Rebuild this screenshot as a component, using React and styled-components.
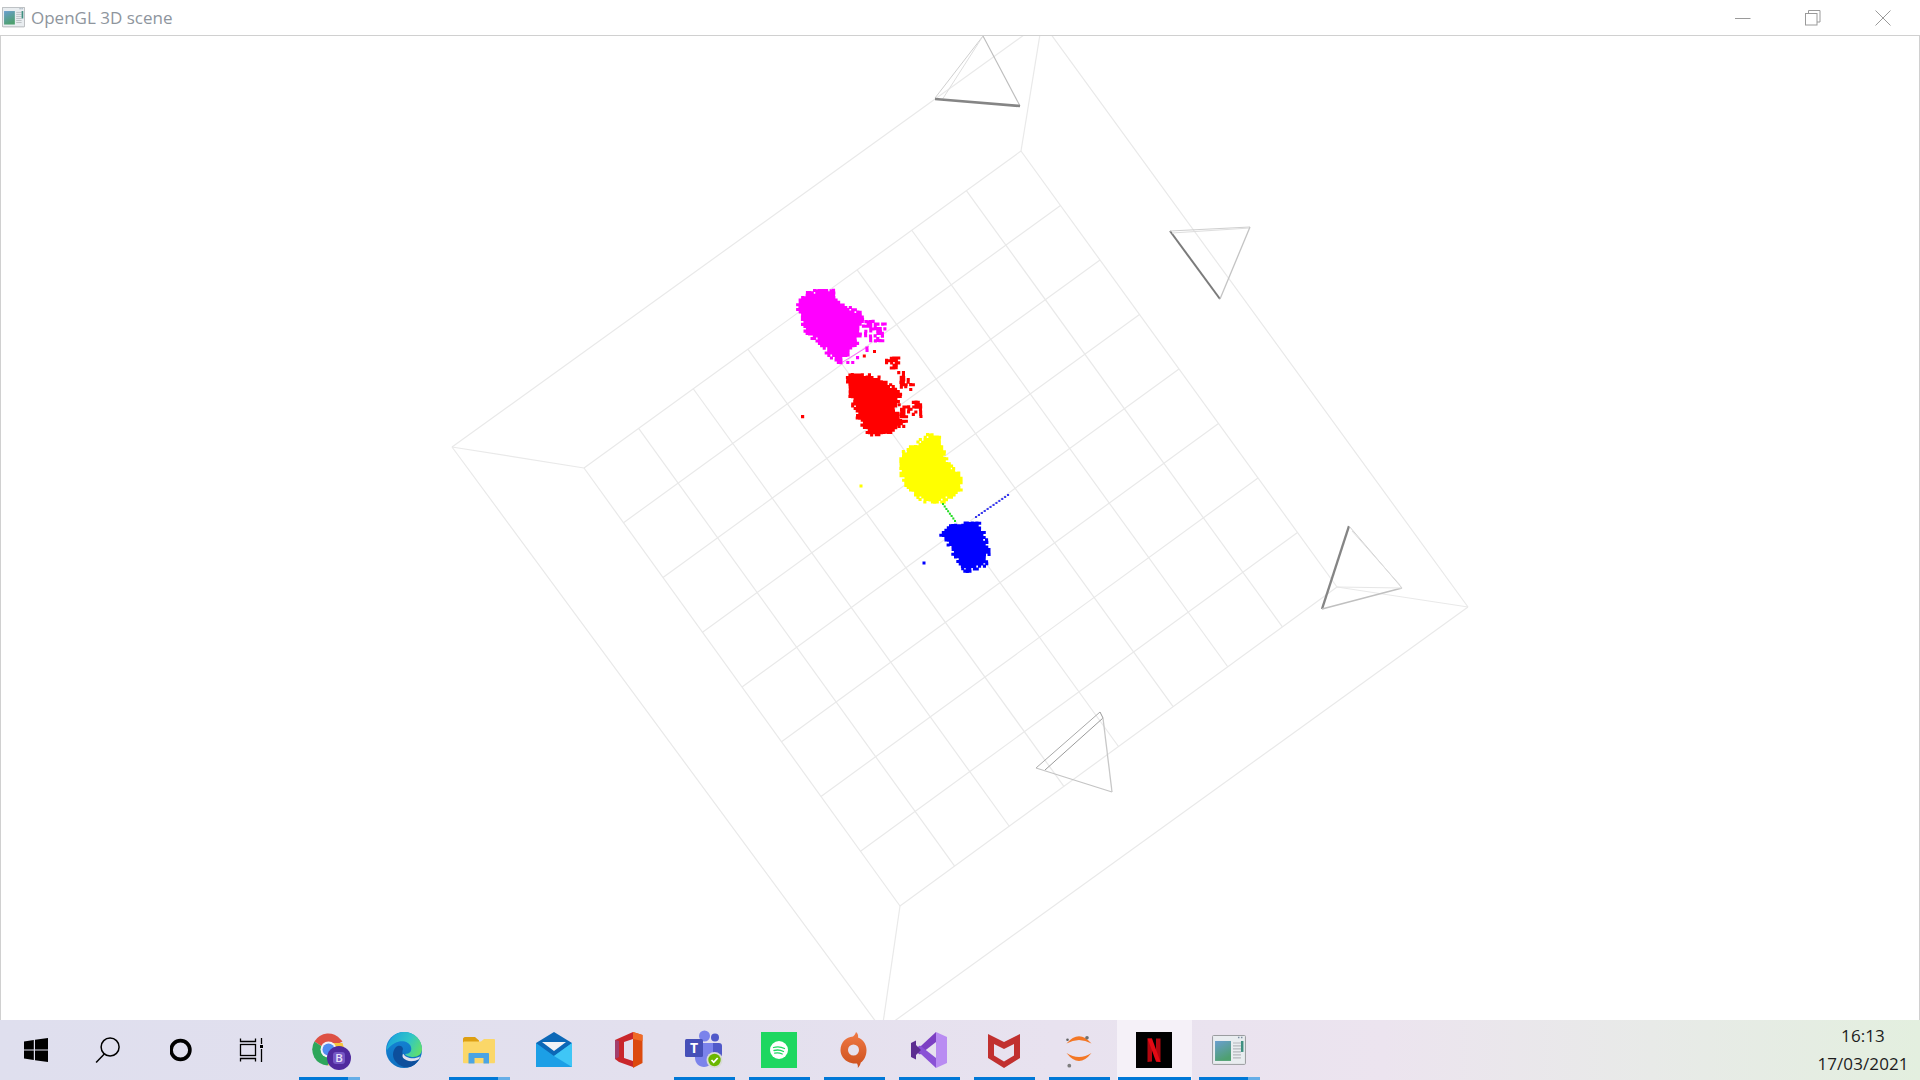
import React from 'react';
import styled, { createGlobalStyle } from 'styled-components';

const GlobalStyle = createGlobalStyle`
  html, body { margin: 0; padding: 0; background: #fff; overflow: hidden; }
  body { font-family: "Open Sans", "Noto Sans", sans-serif; }
`;

const Page = styled.div`
  display: flex;
  flex-direction: column;
  width: 1920px;
  height: 1080px;
`;

const TitleBar = styled.header`
  display: flex;
  align-items: center;
  flex: 0 0 36px;
  box-sizing: border-box;
  padding-left: 2px;
  background: #fff;
  border-bottom: 1px solid #d0d0d0;
`;

const TitleText = styled.span`
  margin-left: 6px;
  font-size: 17px;
  color: #8e959d;
`;

const WindowButtons = styled.div`
  display: flex;
  margin-left: auto;
  margin-right: 2px;
`;

const WindowButton = styled.div`
  display: flex;
  align-items: center;
  justify-content: center;
  width: 70px;
  height: 33px;
`;

const Viewport = styled.main`
  flex: 1;
  min-height: 0;
  overflow: hidden;
  border-left: 1px solid #d0d0d0;
  border-right: 1px solid #d0d0d0;
  svg { display: block; width: 100%; height: 100%; }
`;

const Taskbar = styled.footer`
  display: flex;
  flex: 0 0 60px;
  background: linear-gradient(90deg, #dfdfee 0%, #e3e0ee 35%, #e8e2ef 55%, #ece4ef 72%, #e8eae8 86%, #e3efdf 100%);
`;

const ShellButton = styled.div`
  display: flex;
  align-items: center;
  justify-content: center;
  width: 73px;
`;

const Tile = styled.div`
  position: relative;
  display: flex;
  align-items: center;
  justify-content: center;
  box-sizing: border-box;
  width: 75px;
  padding-right: 1px;
  background: ${p => (p.$active ? '#f5f1f8' : 'transparent')};
  svg { overflow: visible; }
  ${p => p.$running && `
    &::after {
      content: "";
      position: absolute;
      bottom: 0;
      left: ${p.$active ? '1px' : '7px'};
      right: ${p.$active ? '1px' : '7px'};
      height: 3px;
      background: ${p.$stacked
        ? 'linear-gradient(90deg, #0078d7 0 80%, #66aee7 80% 100%)'
        : '#0078d7'};
    }
  `}
`;

const Clock = styled.div`
  display: flex;
  flex-direction: column;
  align-items: center;
  justify-content: center;
  width: 110px;
  margin-left: auto;
  margin-right: 2px;
  font-size: 17px;
  line-height: 28px;
  letter-spacing: 0.1px;
  color: #1c1c1c;
`;

/* ---------- scene data, in screen coordinates ---------- */

const inner = { left: [584, 468], top: [1021, 151], right: [1337, 587], bottom: [900, 906] };
const outer = { left: [452, 447], top: [1042, 22], right: [1468, 607], bottom: [882, 1030] };

const lerp = (a, b, t) => [a[0] + (b[0] - a[0]) * t, a[1] + (b[1] - a[1]) * t];

const gridLines = [];
for (let i = 1; i < 8; i++) {
  const t = i / 8;
  gridLines.push([lerp(inner.left, inner.top, t), lerp(inner.bottom, inner.right, t)]);
  gridLines.push([lerp(inner.left, inner.bottom, t), lerp(inner.top, inner.right, t)]);
}

const frameLines = [
  [outer.left, outer.top], [outer.top, outer.right], [outer.right, outer.bottom], [outer.bottom, outer.left],
  [inner.left, inner.top], [inner.top, inner.right], [inner.right, inner.bottom], [inner.bottom, inner.left],
  [outer.left, inner.left], [outer.top, inner.top], [outer.right, inner.right], [outer.bottom, inner.bottom],
];

// camera frustums: x1, y1, x2, y2, colour, width
const cameras = [
  [983, 36, 935, 98, '#cfcfcf', 1], [983, 36, 942, 100, '#dedede', 1], [983, 36, 1020, 106, '#bdbdbd', 1.1],
  [935, 99, 1020, 106, '#858585', 2.6],
  [1170, 231, 1220, 299, '#7b7b7b', 2], [1170, 231, 1250, 227, '#cfcfcf', 1], [1172, 233, 1250, 228, '#dedede', 1],
  [1250, 227, 1220, 299, '#c4c4c4', 1.3],
  [1349, 526, 1322, 609, '#858585', 2.4], [1349, 526, 1402, 588, '#cfcfcf', 1], [1352, 531, 1400, 585, '#dedede', 1],
  [1322, 609, 1402, 588, '#c0c0c0', 1.5], [1337, 587, 1402, 588, '#e6e6e6', 1],
  [1100, 712, 1036, 768, '#a8a8a8', 1], [1103, 718, 1045, 770, '#9a9a9a', 1], [1103, 718, 1112, 792, '#c8c8c8', 1.3],
  [1100, 712, 1103, 718, '#999', 1], [1036, 768, 1112, 792, '#c4c4c4', 1.2],
];

function makeRandom(seed) {
  let a = seed;
  return () => {
    a = (a + 0x6d2b79f5) | 0;
    let t = Math.imul(a ^ (a >>> 15), 1 | a);
    t = (t + Math.imul(t ^ (t >>> 7), 61 | t)) ^ t;
    return ((t ^ (t >>> 14)) >>> 0) / 4294967296;
  };
}

// polygons are read off a 3x crop whose origin is 770,270
const crop = pts => pts.map(([x, y]) => [x / 3 + 768.5, y / 3 + 269]);

function inside(poly, x, y) {
  let hit = false;
  for (let i = 0, j = poly.length - 1; i < poly.length; j = i++) {
    const [xi, yi] = poly[i];
    const [xj, yj] = poly[j];
    if (yi > y !== yj > y && x < ((xj - xi) * (y - yi)) / (yj - yi) + xi) hit = !hit;
  }
  return hit;
}

function edgeDistance(poly, x, y) {
  let best = Infinity;
  for (let i = 0, j = poly.length - 1; i < poly.length; j = i++) {
    const [ax, ay] = poly[j];
    const [bx, by] = poly[i];
    const dx = bx - ax;
    const dy = by - ay;
    const t = Math.max(0, Math.min(1, ((x - ax) * dx + (y - ay) * dy) / (dx * dx + dy * dy)));
    best = Math.min(best, Math.hypot(x - ax - dx * t, y - ay - dy * t));
  }
  return best;
}

function cloudPath(poly, seed, density = 1, size = 3.1) {
  const rnd = makeRandom(seed);
  const xs = poly.map(p => p[0]);
  const ys = poly.map(p => p[1]);
  let d = '';
  for (let x = Math.min(...xs); x < Math.max(...xs); x += 2.4) {
    for (let y = Math.min(...ys); y < Math.max(...ys); y += 2.4) {
      if (!inside(poly, x, y)) continue;
      const keep = edgeDistance(poly, x, y) < 3 ? 0.72 * density : density;
      if (rnd() > keep) continue;
      d += `M${(x + rnd() * 0.5).toFixed(1)} ${(y + rnd() * 0.5).toFixed(1)}h${size}v${size}h-${size}z`;
    }
  }
  return d;
}

function linePath(a, b, count, size) {
  let d = '';
  for (let i = 0; i <= count; i++) {
    const [x, y] = lerp(a, b, i / count);
    d += `M${x.toFixed(1)} ${y.toFixed(1)}h${size}v${size}h-${size}z`;
  }
  return d;
}

const clouds = [
  {
    color: '#ff00ff',
    d:
      cloudPath(crop([[75, 100], [100, 70], [150, 52], [190, 58], [205, 92], [272, 125], [282, 150], [268, 215], [212, 280], [165, 250], [158, 228], [105, 188]]), 3) +
      cloudPath(crop([[278, 145], [345, 158], [342, 215], [285, 212], [272, 180]]), 5, 0.5) +
      cloudPath(crop([[225, 280], [292, 225], [298, 240], [250, 275]]), 9, 0.5),
  },
  {
    color: '#ff0000',
    d:
      cloudPath(crop([[225, 315], [260, 305], [340, 320], [395, 372], [380, 402], [392, 450], [360, 495], [295, 500], [250, 425]]), 7) +
      cloudPath(crop([[385, 400], [412, 398], [440, 380], [458, 410], [452, 438], [412, 440], [405, 470], [372, 490]]), 11, 0.58) +
      cloudPath(crop([[335, 270], [385, 255], [395, 300], [435, 338], [422, 358], [385, 348], [375, 300]]), 13, 0.7) +
      'M862.8 354.5h3v3h-3z M801 415h3.200v3.200h-3.200z M873 350h3v3h-3z',
  },
  {
    color: '#ffff00',
    d:
      cloudPath(crop([[395, 545], [480, 485], [508, 498], [530, 560], [578, 625], [575, 660], [520, 695], [460, 697], [400, 640], [385, 600]]), 17) +
      'M859.5 484.5h3v3h-3z',
  },
  { color: '#22e022', d: linePath([942, 503], [954, 520], 7, 2) },
  {
    color: '#0000ff',
    d:
      cloudPath(crop([[505, 800], [550, 750], [630, 755], [660, 830], [650, 885], [585, 908], [545, 850], [520, 800]]), 23) +
      'M922.5 561.5h3v3h-3z',
  },
  { color: '#3a3af0', d: linePath([975, 516], [1007, 494], 11, 2.1) },
];

/* ---------- icons ---------- */

const WindowsIcon = () => (
  <svg width="24" height="24" viewBox="1 0 24 24" fill="#000" style={{ overflow: 'visible' }}>
    <path d="M0 3.4 9.8 2v9.5H0zM11 1.8 24 0v11.500H11zM0 12.600h9.800V22L0 20.600zM11 12.600h13V24l-13-1.800z" />
  </svg>
);

const SearchIcon = () => (
  <svg width="26" height="26" viewBox="2.400 0 26 26" fill="none" stroke="#000" strokeWidth="1.500" style={{ overflow: 'visible' }}>
    <circle cx="15.500" cy="10" r="9" />
    <path d="M9.700 17 1.500 25.500" />
  </svg>
);

const CortanaIcon = () => (
  <svg width="26" height="26" viewBox="0 0 26 26" fill="none" stroke="#000" strokeWidth="3.600">
    <circle cx="10.500" cy="13" r="9.400" />
  </svg>
);

const TaskViewIcon = () => (
  <svg width="26" height="24" viewBox="3.500 0 26 24" fill="none" stroke="#000" strokeWidth="1.300" style={{ overflow: 'visible' }}>
    <path d="M1 .5v3h15v-3M1 23.500v-3h15v3" />
    <rect x="1" y="6.500" width="15" height="11" />
    <path d="M22 0v6M22 11v13" />
    <rect x="20.500" y="7" width="3" height="3" fill="#000" stroke="none" />
  </svg>
);

const ChromeIcon = () => (
  <svg width="36" height="36" viewBox="-1.500 0 36 36">
    <path d="M14 17.500 1.900 9.500A16 16 0 0 1 28.200 7.500L30 9.500z" fill="#dd5144" />
    <path d="M14 17.500 1.900 9.500A16 16 0 0 0 15 33.500l6-10z" fill="#2da65a" />
    <path d="M18 11h12a16 16 0 0 1-15 22.500L23 20z" fill="#f5c63b" />
    <circle cx="16" cy="17.500" r="8" fill="#f2f2f7" />
    <circle cx="16" cy="17.500" r="6" fill="#4f8df0" />
    <circle cx="26.500" cy="26" r="12" fill="#4f2a9d" />
    <rect x="20.500" y="20" width="12" height="12" rx="3" fill="#7558c4" />
    <text x="26.500" y="30.200" textAnchor="middle" fontFamily="Open Sans, sans-serif" fontSize="11.500" fontWeight="600" fill="#e8e2f8">B</text>
  </svg>
);

const EdgeIcon = () => (
  <svg width="36" height="36" viewBox="0 0 36 36">
    <defs>
      <linearGradient id="edgeTop" x1="0" y1="0.3" x2="1" y2="0.7">
        <stop offset="0" stopColor="#1aa3dc" />
        <stop offset="0.55" stopColor="#2fc5c8" />
        <stop offset="1" stopColor="#62e06a" />
      </linearGradient>
      <linearGradient id="edgeBody" x1="0.2" y1="0" x2="0.4" y2="1">
        <stop offset="0" stopColor="#1587d8" />
        <stop offset="1" stopColor="#0e6fbf" />
      </linearGradient>
    </defs>
    <circle cx="18" cy="18" r="18" fill="url(#edgeBody)" />
    <path d="M10 15c-4 4-4 11 0 15 5 6 15 8 21 0 2-2 2-3 3-5-5 4-13 3-16 0-2-2-2-5-1-8 0-2-3-5-7-2z" fill="#0d4f9c" />
    <path d="M17.500 22c2 4 10 6 16.500 2.500l-.8 2.500c-6 3.500-13 2.500-16-1-1-1.500-.8-3-.2-4z" fill="#e0dfee" />
    <path d="M18 0C29 0 36 8 36 17c0 5-4 8-9 8-3 0-7-1-8-3 5 0 7-3 6-7-2-6-10-7-16-4-4 2-7 5-8.500 8C1 8 9 0 18 0z" fill="url(#edgeTop)" />
  </svg>
);

const FolderIcon = () => (
  <svg width="36" height="36" viewBox="0 0 36 36">
    <path d="M2 7c0-1 .8-2 2-2h10l4 3.500V14H2z" fill="#dd9f12" />
    <path d="M2 11c0-1 .7-1.500 1.500-1.500H20L23 7h10c.8 0 1 .7 1 1.500V30c0 .8-.4 1.300-1.300 1.300H3.300C2.500 31.300 2 30.800 2 30z" fill="#fbd768" />
    <path d="M7.500 31.500V22c0-.8.5-1 1-1H27c.6 0 1 .3 1 1v9.500h-5.500V26h-9v5.500z" fill="#4aa4e4" />
  </svg>
);

const MailIcon = () => (
  <svg width="36" height="36" viewBox="0 0 36 36">
    <path d="M0 11 18 0l18 11v24H0z" fill="#0c68b7" />
    <path d="M6 10h24l-12 9z" fill="#f2f3f6" />
    <path d="M0 11l18 13 18-13v24H0z" fill="#1c9fe6" />
    <path d="M36 11 18 24l18 11z" fill="#3fc6f6" />
  </svg>
);

const OfficeIcon = () => (
  <svg width="36" height="36" viewBox="0 0 36 36">
    <path d="M4 8 22 0v7l-9 3v16l9 3v6L8 30 4 27z" fill="#c9262b" />
    <path d="M4 8v19l4-2V9z" fill="#a33f6c" />
    <path d="M22 0l9.500 3v28L22 36z" fill="#dc4a0d" />
    <path d="M22 0l9.500 3v6L22 7z" fill="#f06a25" />
  </svg>
);

const TeamsIcon = () => (
  <svg width="38" height="38" viewBox="0 0 38 38">
    <circle cx="30" cy="6.500" r="4" fill="#5059c9" />
    <rect x="24" y="12" width="13" height="14" rx="3" fill="#5059c9" />
    <circle cx="19.500" cy="5" r="5.500" fill="#7b83eb" />
    <path d="M10 12h18v15c0 5-4 9-9 9s-9-4-9-9z" fill="#7b83eb" />
    <rect x="0" y="8" width="18" height="18" rx="1.500" fill="#4650b8" />
    <text x="9" y="22" textAnchor="middle" fontFamily="Open Sans, sans-serif" fontSize="14" fontWeight="700" fill="#fff">T</text>
    <circle cx="29.500" cy="29" r="8" fill="#d8dad6" />
    <circle cx="29.500" cy="29" r="6.200" fill="#6bb700" />
    <path d="M26.500 29l2.200 2.300 4-4.300" fill="none" stroke="#fff" strokeWidth="1.800" />
  </svg>
);

const SpotifyIcon = () => (
  <svg width="36" height="36" viewBox="0 0 36 36">
    <rect width="36" height="36" fill="#1ed760" />
    <circle cx="18" cy="18" r="9" fill="#fff" />
    <path d="M12.500 15.500c3.500-1 7.500-.8 11 1M13 18.500c3-.8 6.500-.6 9.500 1M13.700 21.200c2.500-.6 5-.4 7.500.8" fill="none" stroke="#1ed760" strokeWidth="1.300" strokeLinecap="round" />
  </svg>
);

const OriginIcon = () => (
  <svg width="36" height="36" viewBox="0 0 36 36">
    <defs>
      <linearGradient id="originFill" x1="0" y1="0" x2="0" y2="1">
        <stop offset="0" stopColor="#f07a45" />
        <stop offset="1" stopColor="#cc4f1c" />
      </linearGradient>
    </defs>
    <path fillRule="evenodd" d="M20 0c-.5 1.800-1.500 3.300-3 4.600C10 5 4.500 10.500 4.500 18c0 5.500 3.500 10.500 9 12.500 2.500 1 5 1 7.500 1 1 1.600 1 3 .8 4.500 1.500-1.500 2.600-3.500 3-5.500C28 28.500 30.500 24 30.500 18c0-6-4-11-8.500-12.500.5-1.800 0-3.800-2-5.500zM17.500 12.500a5.500 5.500 0 1 1 0 11 5.500 5.500 0 0 1 0-11z" fill="url(#originFill)" />
  </svg>
);

const VisualStudioIcon = () => (
  <svg width="36" height="36" viewBox="0 0 36 36">
    <path d="M25 0 4 19.500l5 3L25 10z" fill="#7c3fc3" />
    <path d="M25 36 4 16.500l5-3L25 26z" fill="#8a52d6" />
    <path d="M0 11l5-2.500v19L0 25zM5 13v10l5-5z" fill="#5c2d91" />
    <path d="M25 0l11 5v26l-11 5z" fill="#b98cf2" />
  </svg>
);

const McAfeeIcon = () => (
  <svg width="36" height="36" viewBox="0 0 36 36">
    <path fillRule="evenodd" d="M2 2l16 8 16-8v24L18 36 2 26zM8 12v11.500l10 6 10-6V12l-10 5z" fill="#c1302f" />
  </svg>
);

const JupyterIcon = () => (
  <svg width="36" height="36" viewBox="0 0 36 36">
    <path d="M5.500 11.500Q18-3 30.500 11.500 18 4.500 5.500 11.500z" fill="#f37726" />
    <path d="M5.500 21Q18 37 30.500 21 18 29 5.500 21z" fill="#f37726" />
    <circle cx="6.500" cy="7.700" r="1.300" fill="#616262" />
    <circle cx="26" cy="5.700" r="1.800" fill="#6f7070" />
    <circle cx="8.300" cy="33.700" r="1.900" fill="#7e7e7e" />
  </svg>
);

const NetflixIcon = () => (
  <svg width="36" height="36" viewBox="0 0 36 36">
    <rect width="36" height="36" fill="#000" />
    <path d="M11.500 6.500h4.500v23l-4.500.6zM20 6.500h4.500v23.500l-4.500-.6z" fill="#b1060f" />
    <path d="M11.500 6.500h4.500l8.500 23.500-4.500-.6z" fill="#e50914" />
  </svg>
);

const AppWindowIcon = ({ size = 34, id = 'appPane' }) => (
  <svg width={size} height={size * 0.88} viewBox="0 0 34 30">
    <defs>
      <linearGradient id={id} x1="0" y1="0" x2="0.4" y2="1">
        <stop offset="0" stopColor="#6a9ed0" />
        <stop offset="1" stopColor="#4ea070" />
      </linearGradient>
    </defs>
    <rect x="0.500" y="0.500" width="33" height="29" rx="1" fill="#e9edf0" stroke="#9a9c9f" />
    <rect x="3" y="6" width="16" height="20" fill={`url(#${id})`} />
    <path d="M21 8h8M21 11h8M21 14h8M21 17h8M21 20h8M21 23h8" stroke="#b4b8bc" strokeWidth="1.200" />
    <rect x="29" y="6" width="2.500" height="11" fill="#3f8f80" />
    <path d="M26 2.500h1.500M29 2.500h1.500" stroke="#7c8ea0" strokeWidth="1.500" />
  </svg>
);

const MinimizeGlyph = () => (
  <svg width="16" height="16" viewBox="0 0 16 16"><path d="M0 8.500h15.500" stroke="#9a9a9a" /></svg>
);

const RestoreGlyph = () => (
  <svg width="16" height="16" viewBox="0 0 16 16" fill="none" stroke="#9a9a9a">
    <rect x="0.500" y="3.500" width="11.500" height="11.500" />
    <path d="M3.500 3.500V.5H15v11.500h-3" />
  </svg>
);

const CloseGlyph = () => (
  <svg width="16" height="16" viewBox="0 0 16 16"><path d="M.5.500l15 15M15.500.5l-15 15" stroke="#9a9a9a" /></svg>
);

const pinned = [
  { key: 'chrome', Icon: ChromeIcon, running: true, stacked: true },
  { key: 'edge', Icon: EdgeIcon },
  { key: 'explorer', Icon: FolderIcon, running: true, stacked: true },
  { key: 'mail', Icon: MailIcon },
  { key: 'office', Icon: OfficeIcon },
  { key: 'teams', Icon: TeamsIcon, running: true },
  { key: 'spotify', Icon: SpotifyIcon, running: true },
  { key: 'origin', Icon: OriginIcon, running: true },
  { key: 'vs', Icon: VisualStudioIcon, running: true },
  { key: 'mcafee', Icon: McAfeeIcon, running: true },
  { key: 'jupyter', Icon: JupyterIcon, running: true },
  { key: 'netflix', Icon: NetflixIcon, running: true, active: true },
  { key: 'app', Icon: AppWindowIcon, running: true, stacked: true },
];

const Scene = () => (
  <svg viewBox="1 36 1918 984" preserveAspectRatio="none">
    <g stroke="#e9e9e9" strokeWidth="1.2" fill="none">
      {frameLines.concat(gridLines).map(([a, b], i) => (
        <line key={i} x1={a[0]} y1={a[1]} x2={b[0]} y2={b[1]} />
      ))}
    </g>
    {cameras.map(([x1, y1, x2, y2, color, width], i) => (
      <line key={i} x1={x1} y1={y1} x2={x2} y2={y2} stroke={color} strokeWidth={width} />
    ))}
    <path d="M827 345l14 18 28-17" fill="none" stroke="#ff66ff" strokeWidth="1" />
    {clouds.map(c => (
      <path key={c.color} d={c.d} fill={c.color} />
    ))}
  </svg>
);

export default function App() {
  return (
    <Page>
      <GlobalStyle />
      <TitleBar>
        <AppWindowIcon size={23} id="titlePane" />
        <TitleText>OpenGL 3D scene</TitleText>
        <WindowButtons>
          <WindowButton><MinimizeGlyph /></WindowButton>
          <WindowButton><RestoreGlyph /></WindowButton>
          <WindowButton><CloseGlyph /></WindowButton>
        </WindowButtons>
      </TitleBar>
      <Viewport>
        <Scene />
      </Viewport>
      <Taskbar>
        <ShellButton><WindowsIcon /></ShellButton>
        <ShellButton><SearchIcon /></ShellButton>
        <ShellButton><CortanaIcon /></ShellButton>
        <ShellButton><TaskViewIcon /></ShellButton>
        {pinned.map(({ key, Icon, running, stacked, active }) => (
          <Tile key={key} $running={running} $stacked={stacked} $active={active}>
            <Icon />
          </Tile>
        ))}
        <Clock>
          <span>16:13</span>
          <span>17/03/2021</span>
        </Clock>
      </Taskbar>
    </Page>
  );
}
